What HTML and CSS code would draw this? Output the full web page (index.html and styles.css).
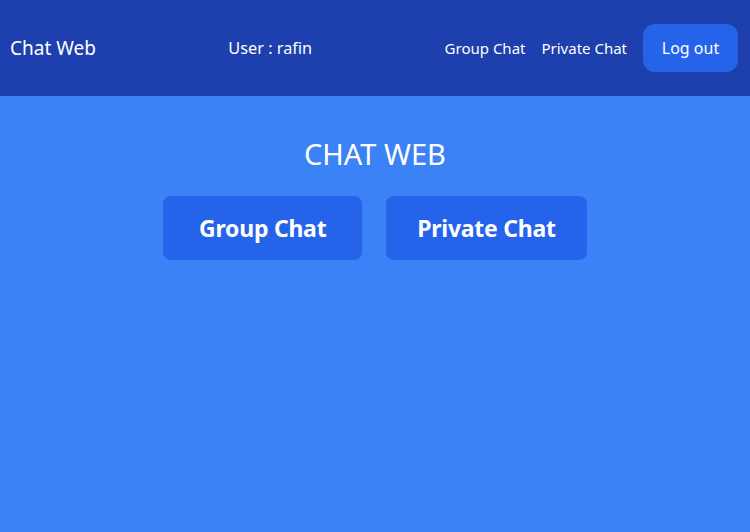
FILE: index.html
```html
<!DOCTYPE html>
<html>
<head>
<meta charset="utf-8">
<link rel="stylesheet" href="styles.css">
</head>
<body>
<header class="topbar">
  <div class="brand">Chat Web</div>
  <div class="user">User : rafin</div>
  <nav class="nav">
    <a class="nav-link">Group Chat</a>
    <a class="nav-link">Private Chat</a>
    <button class="logout">Log out</button>
  </nav>
</header>
<main class="main">
  <h1 class="title">CHAT WEB</h1>
  <div class="actions">
    <button class="big-btn">Group Chat</button>
    <button class="big-btn">Private Chat</button>
  </div>
</main>
</body>
</html>
```
FILE: styles.css
```css
* { box-sizing: border-box; }
html, body { margin: 0; padding: 0; height: 100%; }
body {
  font-family: "Noto Sans", "Open Sans", sans-serif;
  background: #3b82f6;
  color: #fff;
}
.topbar {
  background: #1e40af;
  height: 96px;
  display: flex;
  align-items: center;
  justify-content: space-between;
  padding: 0 12px 0 10px;
}
.brand { font-size: 19px; }
.user { font-size: 16.3px; }
.nav { display: flex; align-items: center; }
.nav-link { font-size: 15px; margin-right: 16px; }
.logout {
  font-family: inherit;
  background: #2563eb;
  color: #fff;
  border: none;
  border-radius: 12px;
  height: 48px;
  width: 95px;
  font-size: 16px;
}
.main {
  display: flex;
  flex-direction: column;
  align-items: center;
  padding-top: 40px;
}
.title {
  margin: 0 0 24px;
  font-weight: 400;
  font-size: 29px;
  line-height: 36px;
}
.actions { display: flex; gap: 24px; }
.big-btn {
  font-family: inherit;
  background: #2563eb;
  color: #fff;
  border: none;
  border-radius: 8px;
  height: 64px;
  min-width: 199px;
  padding: 0 31px;
  font-size: 23px;
  font-weight: 700;
  letter-spacing: -0.25px;
}
```
